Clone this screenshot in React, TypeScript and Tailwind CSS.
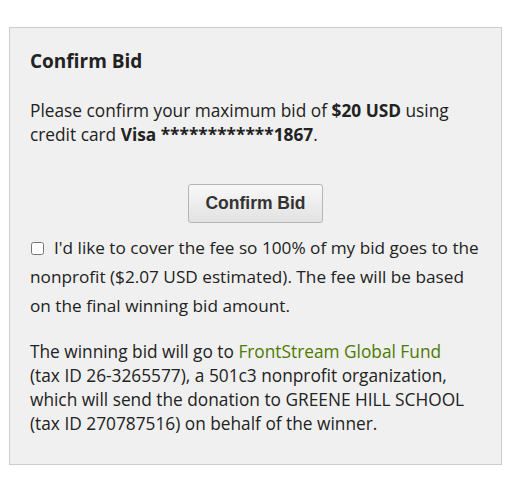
import { useState } from "react";

export default function App() {
  const [coverFee, setCoverFee] = useState(false);

  return (
    <div className="min-h-[477px] bg-white pt-[27px] pl-[9px] font-['Open_Sans',sans-serif] text-[#222]">
      <div className="w-[493px] border border-[#cccccc] bg-[#f0f0f0] pl-5 pr-[18px] pt-[21px] pb-[28px]">
        <h2 className="text-[19px] leading-[24px] font-bold">Confirm Bid</h2>

        <p className="mt-[26px] text-[17.3px] leading-[24px]">
          Please confirm your maximum bid of <strong>$20 USD</strong> using credit card{" "}
          <strong>Visa ************1867</strong>.
        </p>

        <div className="mt-[37px] flex justify-center">
          <button
            type="button"
            className="mr-[2px] h-[39px] w-[135px] rounded-[3px] border border-[#b5b5b5] bg-gradient-to-b from-[#f8f8f8] to-[#e2e2e2] font-['Liberation_Sans',Arial,sans-serif] text-[17.5px] font-bold text-[#333]"
          >
            Confirm Bid
          </button>
        </div>

        <label className="mt-[10px] block text-[17.2px] leading-[29px]">
          <input
            type="checkbox"
            checked={coverFee}
            onChange={(e) => setCoverFee(e.target.checked)}
            className="mr-[10px] ml-[1px] inline-block h-[13px] w-[13px] align-[-1px]"
          />
          I'd like to cover the fee so 100% of my bid goes to the nonprofit ($2.07 USD estimated). The fee will be
          based on the final winning bid amount.
        </label>

        <p className="mt-[20px] text-[17.3px] leading-[24px]">
          The winning bid will go to{" "}
          <a href="#" className="text-[#4d7a00]">
            FrontStream Global Fund
          </a>
          <br />
          (tax ID 26-3265577), a 501c3 nonprofit organization, which will send the donation to GREENE HILL SCHOOL
          (tax ID 270787516) on behalf of the winner.
        </p>
      </div>
    </div>
  );
}
